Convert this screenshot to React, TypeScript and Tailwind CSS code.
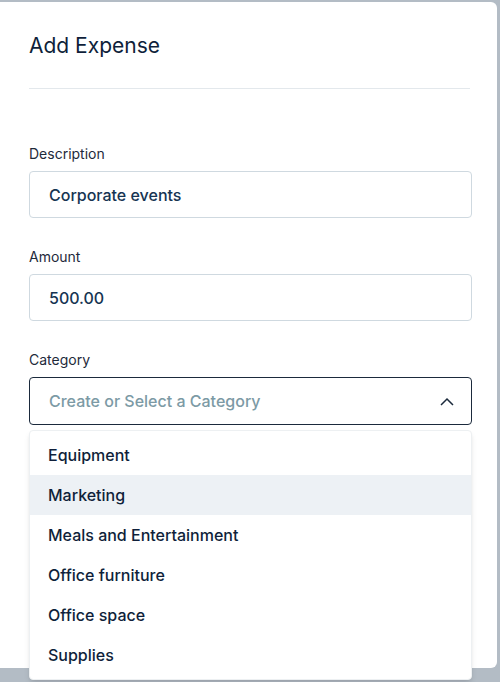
import React from 'react';

const categories = ['Equipment', 'Marketing', 'Meals and Entertainment', 'Office furniture', 'Office space', 'Supplies'];

function Field({ label, value }: { label: string; value: string }) {
  return (
    <div className="flex flex-col">
      <label className="text-[14px] leading-5 text-[#1e2a3b] mb-[7px]">{label}</label>
      <div className="h-[47px] rounded-[4px] border border-[#cfd9e0] flex items-center px-[19px] text-[16px] font-medium text-[#163452]">
        {value}
      </div>
    </div>
  );
}

export default function App() {
  return (
    <div className="w-[500px] h-[682px] bg-[#b3bcc5] pt-[2px] overflow-hidden" style={{ fontFamily: 'Inter, "Noto Sans", sans-serif' }}>
      <div className="w-[497px] h-[666px] bg-white rounded-r-[6px] px-[29px] pt-[30px] relative">
        <h2 className="text-[21px] leading-7 text-[#0f1f3a] mr-[-2px]">Add Expense</h2>
        <div className="h-px bg-[#e3e8ec] mt-[28px] mr-[-2px]" />
        <div className="flex flex-col gap-[29px] mt-[55px] mr-[-4px]">
          <Field label="Description" value="Corporate events" />
          <Field label="Amount" value="500.00" />
          <div className="flex flex-col relative">
            <label className="text-[14px] leading-5 text-[#1e2a3b] mb-[7px]">Category</label>
            <div className="h-[48px] rounded-[4px] border border-[#1b2a3c] flex items-center justify-between px-[19px] text-[16px] font-medium text-[#7c9aa5]">
              <span>Create or Select a Category</span>
              <svg width="14" height="9" viewBox="0 0 14 9" fill="none" stroke="#1b2a3c" strokeWidth="1.5" className="mr-[-2px]">
                <path d="M1 8 L7 2 L13 8" />
              </svg>
            </div>
            <div className="absolute left-0 right-0 top-[80px] bg-white rounded-[4px] border border-[#edf0f2] shadow-md py-[4px] z-10">
              {categories.map((c) => (
                <div
                  key={c}
                  className={`h-[40px] flex items-center px-[18px] text-[16px] font-medium text-[#0f1f3a] ${c === 'Marketing' ? 'bg-[#edf1f5]' : ''}`}
                >
                  {c}
                </div>
              ))}
            </div>
          </div>
        </div>
      </div>
    </div>
  );
}
